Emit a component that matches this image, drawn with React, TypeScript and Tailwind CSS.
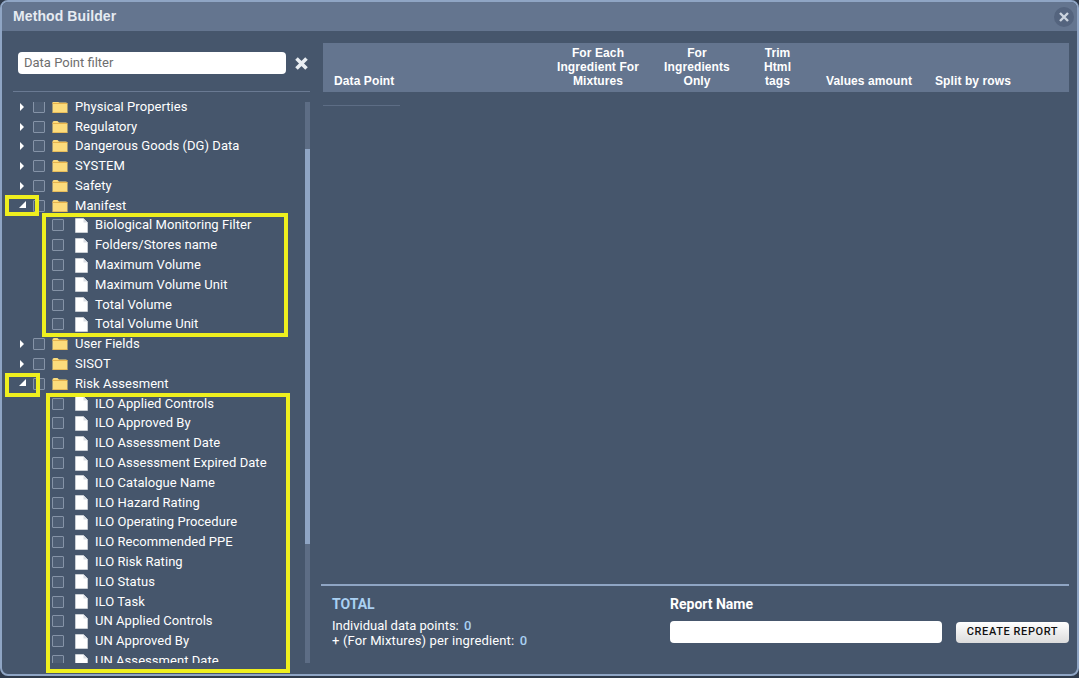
import React from "react";

const manifest = [
  "Biological Monitoring Filter",
  "Folders/Stores name",
  "Maximum Volume",
  "Maximum Volume Unit",
  "Total Volume",
  "Total Volume Unit",
];

const risk = [
  "ILO Applied Controls",
  "ILO Approved By",
  "ILO Assessment Date",
  "ILO Assessment Expired Date",
  "ILO Catalogue Name",
  "ILO Hazard Rating",
  "ILO Operating Procedure",
  "ILO Recommended PPE",
  "ILO Risk Rating",
  "ILO Status",
  "ILO Task",
  "UN Applied Controls",
  "UN Approved By",
  "UN Assessment Date",
];

function FolderIcon() {
  return (
    <svg width="16" height="14" viewBox="0 0 16 14" className="shrink-0">
      <path d="M0.5 2.5 Q0.5 1 2 1 H5.5 L7 2.5 H14 Q15.5 2.5 15.5 4 V12 Q15.5 13 14.5 13 H1.5 Q0.5 13 0.5 12 Z" fill="#fcdc7c" />
      <path d="M0.5 3.5 H15.5" stroke="#e6b24c" strokeWidth="1" />
      <path d="M0.5 12.5 H15.5" stroke="#e9bd5b" strokeWidth="1" />
    </svg>
  );
}

function FileIcon() {
  return (
    <svg width="13" height="15" viewBox="0 0 13 15" className="shrink-0">
      <path d="M0.5 0.5 H8.5 L12.5 4.5 V14.5 H0.5 Z" fill="#ffffff" stroke="#e3e6ea" strokeWidth="0.6" />
      <path d="M8.5 0.5 V4.5 H12.5" fill="#d9dde3" />
    </svg>
  );
}

function Check() {
  return <span className="block w-[12px] h-[12px] shrink-0 border border-[#8593a7] bg-[#4f5f75] rounded-[1px]" />;
}

function Arrow({ open }: { open?: boolean }) {
  return (
    <span className="w-[16px] shrink-0 flex items-center justify-center">
      {open ? (
        <svg width="9" height="9" viewBox="0 0 9 9" className="-mt-[2px]">
          <path d="M8 1 V8 H1 Z" fill="#ffffff" />
        </svg>
      ) : (
        <svg width="6" height="10" viewBox="0 0 6 10">
          <path d="M1 1 L5 5 L1 9 Z" fill="#ffffff" />
        </svg>
      )}
    </span>
  );
}

function FolderRow({ name, open }: { name: string; open?: boolean }) {
  return (
    <div className="h-[19.8px] flex items-center pl-[12px]">
      <Arrow open={open} />
      <span className="ml-[3px]">
        <Check />
      </span>
      <span className="ml-[7px]">
        <FolderIcon />
      </span>
      <span className="ml-[7px] whitespace-nowrap">{name}</span>
    </div>
  );
}

function FileRow({ name }: { name: string }) {
  return (
    <div className="h-[19.8px] flex items-center pl-[50px]">
      <Check />
      <span className="ml-[11px]">
        <FileIcon />
      </span>
      <span className="ml-[7px] whitespace-nowrap">{name}</span>
    </div>
  );
}

function Mark({ className }: { className: string }) {
  return <div className={"absolute border-4 border-[#efef1e] " + className} />;
}

export default function App() {
  return (
    <div className="relative w-[1079px] h-[678px] bg-[#2f3a4a] overflow-hidden font-['Roboto',sans-serif]">
      <div className="h-[676px] border-2 border-[#8fa5c4] rounded-[8px] bg-[#46566c] flex flex-col overflow-hidden">
        {/* title bar */}
        <div className="h-[29px] shrink-0 bg-[#64758f] flex items-center justify-between pl-[11px] pr-[3px]">
          <h1 className="text-[14px] font-bold text-[#e6ebf2] tracking-[0.1px] font-['Liberation_Sans',sans-serif]">Method Builder</h1>
          <button className="w-[20px] h-[20px] rounded-full bg-[#54647e] flex items-center justify-center">
            <svg width="12" height="12" viewBox="0 0 12 12">
              <path d="M2 2 L10 10 M10 2 L2 10" stroke="#ccd4df" strokeWidth="2.4" />
            </svg>
          </button>
        </div>

        <div className="flex-1 flex min-h-0">
          {/* left: tree */}
          <div className="w-[317px] shrink-0 flex flex-col pl-[11px] pr-[9px]">
            <div className="flex items-center h-[61px] border-b border-[#6a7a93] pl-[5px] pt-[3px] shrink-0">
              <input
                readOnly
                placeholder="Data Point filter"
                className="w-[268px] h-[22px] rounded-[4px] bg-white px-[6px] text-[13px] text-[#555] placeholder:text-[#6e6e6e] outline-none"
              />
              <svg width="15" height="15" viewBox="0 0 15 15" className="ml-[8px] mt-[1px]">
                <path d="M2.5 2.5 L12.5 12.5 M12.5 2.5 L2.5 12.5" stroke="#e9edf2" strokeWidth="3.6" />
              </svg>
            </div>
            <div className="flex-1 min-h-0 flex mt-[10px] mb-[11px]">
              <div className="flex-1 overflow-hidden text-[13px] leading-[16px] tracking-[0.05px] text-white -ml-[11px]">
                <div className="-mt-[5.2px]">
                  <FolderRow name="Physical Properties" />
                  <FolderRow name="Regulatory" />
                  <FolderRow name="Dangerous Goods (DG) Data" />
                  <FolderRow name="SYSTEM" />
                  <FolderRow name="Safety" />
                  <FolderRow name="Manifest" open />
                  {manifest.map((m) => (
                    <FileRow key={m} name={m} />
                  ))}
                  <FolderRow name="User Fields" />
                  <FolderRow name="SISOT" />
                  <FolderRow name="Risk Assesment" open />
                  {risk.map((r) => (
                    <FileRow key={r} name={r} />
                  ))}
                </div>
              </div>
              <div className="w-[5px] shrink-0 bg-[#5d6d85] flex flex-col">
                <div className="h-[47px] shrink-0" />
                <div className="h-[395px] bg-[#8fa5c4] shrink-0" />
              </div>
            </div>
          </div>

          {/* right: table + footer */}
          <div className="flex-1 min-w-0 flex flex-col pl-[2px] pr-[8px]">
            <div className="flex-1 min-h-0 pt-[12px] pl-[2px]">
              <div className="h-[49px] bg-[#64758f] flex items-end pb-[4px] text-[12px] leading-[14px] font-bold tracking-[0.1px] text-white text-center font-['Liberation_Sans',sans-serif]">
                <div className="w-[227px] text-left pl-[11px]">Data Point</div>
                <div className="w-[96px]">For Each Ingredient For Mixtures</div>
                <div className="ml-[4px] w-[94px] px-[12px]">For Ingredients Only</div>
                <div className="w-[67px] px-[20px]">Trim Html tags</div>
                <div className="w-[116px]">Values amount</div>
                <div className="w-[92px]">Split by rows</div>
              </div>
              <div className="w-[77px] h-px bg-[#5d6d85] mt-[13px]" />
            </div>

            <div className="h-[90px] shrink-0 border-t-2 border-[#8fa5c4] flex pt-[10px] pl-[11px]">
              <div className="w-[338px] shrink-0 text-[13px] leading-[15px] text-white">
                <div className="text-[14px] font-bold text-[#a9d0f2] leading-[16px]">TOTAL</div>
                <div className="mt-[6px]">
                  Individual data points: <span className="ml-[2px] font-medium text-[#a9d0f2]">0</span>
                </div>
                <div className="tracking-[0.14px]">
                  + (For Mixtures) per ingredient: <span className="ml-[2px] font-medium text-[#a9d0f2]">0</span>
                </div>
              </div>
              <div className="flex-1">
                <div className="text-[14px] font-bold text-white leading-[16px]">Report Name</div>
                <div className="flex items-center mt-[9px]">
                  <input readOnly className="w-[272px] h-[22px] rounded-[4px] bg-white outline-none" />
                  <button className="ml-[14px] w-[113px] h-[21px] rounded-[4px] bg-gradient-to-b from-white to-[#dcdcdc] text-[11px] font-medium tracking-[0.6px] text-[#111]">
                    CREATE REPORT
                  </button>
                </div>
              </div>
            </div>
          </div>
        </div>
      </div>

      {/* yellow annotations over the tree */}
      <Mark className="left-[5px] top-[195px] w-[34px] h-[21px]" />
      <Mark className="left-[42px] top-[213px] w-[246px] h-[124px]" />
      <Mark className="left-[5px] top-[373px] w-[35px] h-[24px]" />
      <Mark className="left-[46px] top-[393px] w-[244px] h-[280px]" />
    </div>
  );
}
